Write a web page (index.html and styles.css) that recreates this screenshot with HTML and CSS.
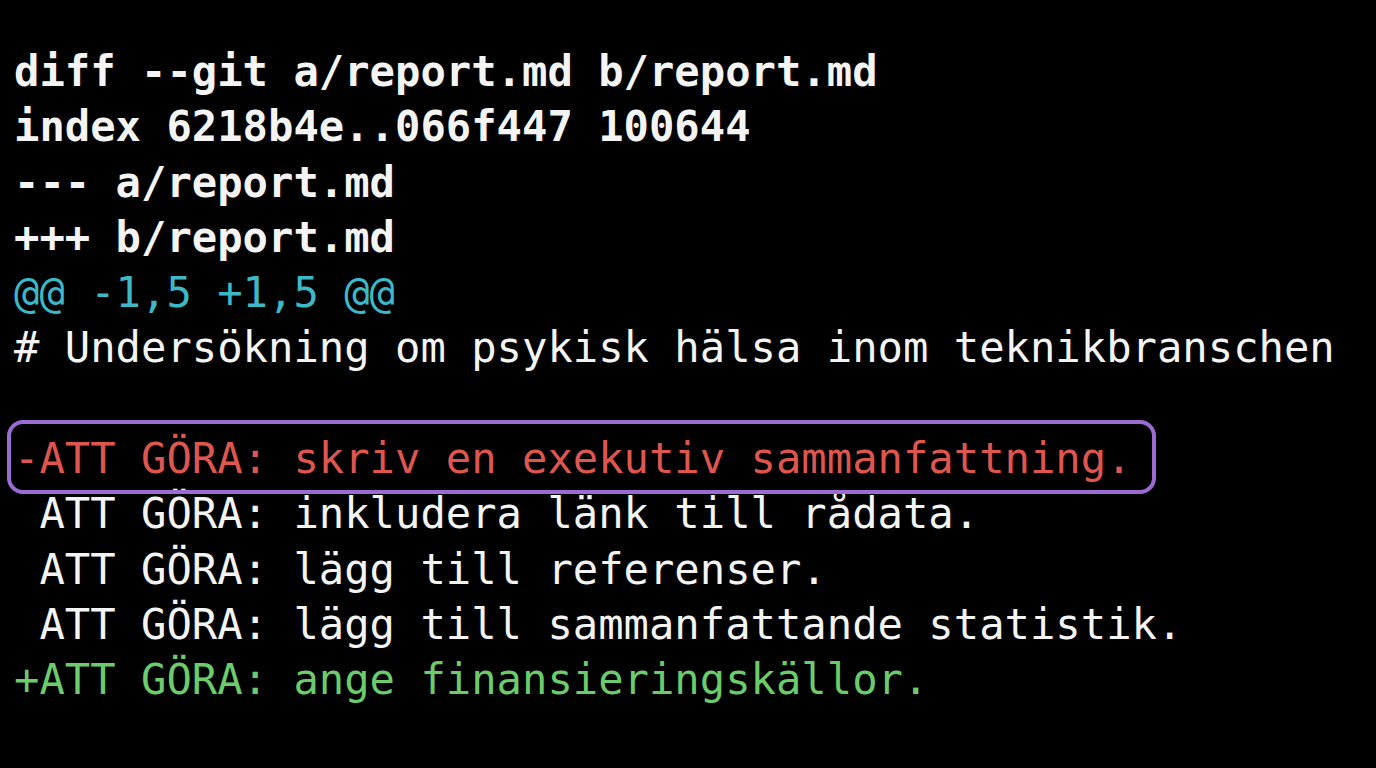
FILE: index.html
```html
<!DOCTYPE html>
<html lang="sv">
<head>
<meta charset="utf-8">
<title>git diff</title>
<link rel="stylesheet" href="styles.css">
</head>
<body>
<pre class="term"><div class="line bold">diff --git a/report.md b/report.md</div><div class="line bold">index 6218b4e..066f447 100644</div><div class="line bold">--- a/report.md</div><div class="line bold">+++ b/report.md</div><div class="line hunk">@@ -1,5 +1,5 @@</div><div class="line"># Undersökning om psykisk hälsa inom teknikbranschen</div><div class="line"> </div><div class="line del"><span class="mark">-ATT GÖRA: skriv en exekutiv sammanfattning.</span></div><div class="line"> ATT GÖRA: inkludera länk till rådata.</div><div class="line"> ATT GÖRA: lägg till referenser.</div><div class="line"> ATT GÖRA: lägg till sammanfattande statistik.</div><div class="line add">+ATT GÖRA: ange finansieringskällor.</div></pre>
</body>
</html>
```
FILE: styles.css
```css
html, body {
  margin: 0;
  padding: 0;
  background: #000;
  width: 1376px;
  height: 768px;
  overflow: hidden;
}
.term {
  margin: 0;
  padding: 44px 0 0 14px;
  font-family: "DejaVu Sans Mono", monospace;
  font-size: 42.2px;
  line-height: 55.3px;
  color: #f4f4f4;
  white-space: pre;
}
.line {
  height: 55.3px;
}
.bold {
  font-weight: bold;
}
.hunk {
  color: #3db8c6;
}
.del {
  color: #df564f;
}
.add {
  color: #6ccb6a;
}
.mark {
  position: relative;
  display: inline-block;
}
.mark::before {
  content: "";
  position: absolute;
  left: -7px;
  right: -24px;
  top: -11px;
  bottom: -8px;
  border: 4px solid #9a6cd2;
  border-radius: 16px;
}
```
